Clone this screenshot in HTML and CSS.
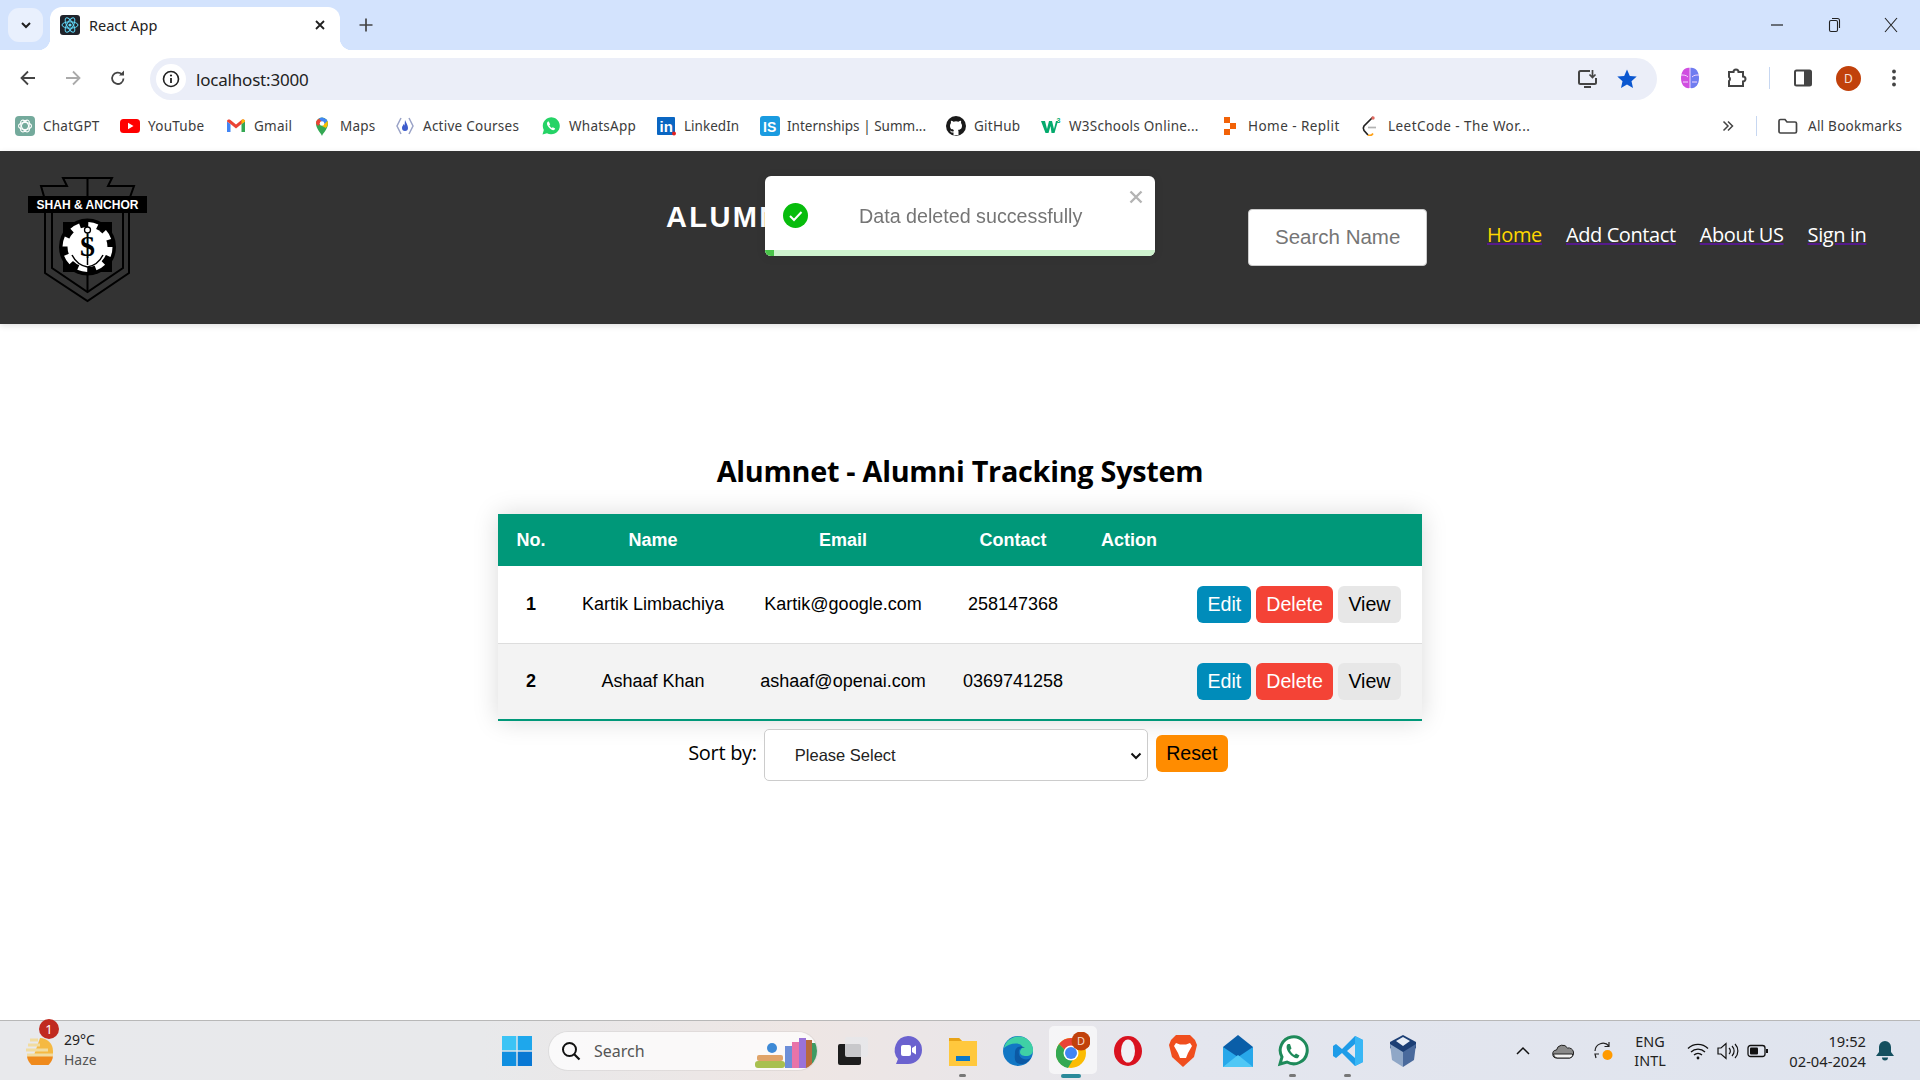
FILE: index.html
```html
<!DOCTYPE html>
<html lang="en">
<head>
<meta charset="utf-8">
<title>React App</title>
<link rel="stylesheet" href="styles.css">
</head>
<body>
<div class="tabstrip">
  <div class="tabtoggle"><svg width="14" height="14" viewBox="0 0 14 14"><path d="M3 5l4 4 4-4" fill="none" stroke="#1f1f1f" stroke-width="2"/></svg></div>
  <div class="tab">
    <svg class="favicon" width="20" height="20" viewBox="0 0 20 20"><rect width="20" height="20" rx="3" fill="#20232a"/><g fill="none" stroke="#61dafb" stroke-width="1"><ellipse cx="10" cy="10" rx="8" ry="3.2"/><ellipse cx="10" cy="10" rx="8" ry="3.2" transform="rotate(60 10 10)"/><ellipse cx="10" cy="10" rx="8" ry="3.2" transform="rotate(120 10 10)"/></g><circle cx="10" cy="10" r="1.6" fill="#61dafb"/></svg>
    <span class="tabtitle">React App</span>
    <svg class="tabclose" width="12" height="12" viewBox="0 0 12 12"><path d="M2 2l8 8M10 2l-8 8" stroke="#1f1f1f" stroke-width="1.8"/></svg>
  </div>
  <svg class="newtab" width="16" height="16" viewBox="0 0 16 16"><path d="M8 1.5v13M1.5 8h13" stroke="#444" stroke-width="1.7"/></svg>
  <div class="winctrls">
    <svg width="14" height="14" viewBox="0 0 14 14"><path d="M1 7h12" stroke="#222" stroke-width="1.2"/></svg>
    <svg width="14" height="16" viewBox="0 0 14 16"><rect x="2.5" y="3.5" width="8" height="11" rx="1.5" fill="none" stroke="#222" stroke-width="1.1"/><path d="M5 1.5h5.5a2 2 0 0 1 2 2V11" fill="none" stroke="#222" stroke-width="1.1"/></svg>
    <svg width="14" height="16" viewBox="0 0 14 16"><path d="M1 1l12 14M13 1L1 15" stroke="#222" stroke-width="1.1"/></svg>
  </div>
</div>

<div class="toolbar">
  <div class="navbtns">
    <svg width="18" height="18" viewBox="0 0 18 18"><path d="M16 9H3M9 2.5L2.5 9 9 15.500" fill="none" stroke="#444" stroke-width="1.8"/></svg>
    <svg width="18" height="18" viewBox="0 0 18 18"><path d="M2 9h13M9 2.500L15.500 9 9 15.500" fill="none" stroke="#aaa" stroke-width="1.800"/></svg>
    <svg width="18" height="18" viewBox="0 0 18 18"><path d="M14.500 9.500a5.700 5.700 0 1 1-1.700-4.300" fill="none" stroke="#444" stroke-width="1.800"/><path d="M15 1.500v5h-5z" fill="#444"/></svg>
  </div>
  <div class="omnibox">
    <div class="siteinfo"><svg width="18" height="18" viewBox="0 0 18 18"><circle cx="9" cy="9" r="7.500" fill="none" stroke="#222" stroke-width="1.600"/><path d="M9 8v5" stroke="#222" stroke-width="1.800"/><circle cx="9" cy="5.500" r="1.100" fill="#222"/></svg></div>
    <span class="url">localhost:3000</span>
    <svg class="omni-install" width="22" height="22" viewBox="0 0 22 22"><path d="M13 3H3.500A1.500 1.500 0 0 0 2 4.500v10A1.500 1.500 0 0 0 3.500 16h14a1.500 1.500 0 0 0 1.500-1.500V10" fill="none" stroke="#444" stroke-width="2"/><path d="M7 19h7" stroke="#444" stroke-width="2"/><path d="M15.500 2v7M12.500 6.500l3 3 3-3" fill="none" stroke="#444" stroke-width="1.700"/></svg>
    <svg class="omni-star" width="22" height="22" viewBox="0 0 22 22"><path d="M11 1.500l2.800 6.400 6.900.7-5.200 4.600 1.500 6.800L11 16.500l-6 3.500 1.500-6.800-5.200-4.600 6.900-.7z" fill="#0b57d0"/></svg>
  </div>
  <svg class="tool-brain" width="22" height="24" viewBox="0 0 22 24"><path d="M11 2C6 1 2 5 2 12s4 11 9 10z" fill="#d04ee0"/><path d="M11 2c5-1 9 3 9 10s-4 11-9 10z" fill="#6f7cf0"/><path d="M2 9c3 0 5 0 7 2M20 9c-3 0-5 0-7 2M4 16h5M13 16h5M11 2v20" stroke="#f4d7ff" stroke-width="1" fill="none"/></svg>
  <svg class="tool-puzzle" width="22" height="24" viewBox="0 0 22 24"><path d="M4 6h4.500a2.500 2.500 0 0 1 5 0H18v4.500a2.500 2.500 0 0 1 0 5V20H4v-5a2.500 2.500 0 0 0 0-4z" fill="none" stroke="#444" stroke-width="2"/></svg>
  <span class="tool-sep"></span>
  <svg class="tool-side" width="20" height="20" viewBox="0 0 20 20"><rect x="2" y="2.500" width="16" height="15" rx="1.500" fill="none" stroke="#444" stroke-width="2"/><rect x="11" y="2.500" width="7" height="15" fill="#444"/></svg>
  <span class="avatar">D</span>
  <svg class="tool-menu" width="6" height="20" viewBox="0 0 6 20"><circle cx="3" cy="3.500" r="1.900" fill="#444"/><circle cx="3" cy="10" r="1.900" fill="#444"/><circle cx="3" cy="16.500" r="1.900" fill="#444"/></svg>
</div>

<div class="bookmarks">
  <div class="bm"><svg width="20" height="20" viewBox="0 0 20 20"><rect width="20" height="20" rx="4" fill="#74aa9c"/><g fill="none" stroke="#fff" stroke-width="1.100"><ellipse cx="10" cy="10" rx="6.500" ry="3.500"/><ellipse cx="10" cy="10" rx="6.500" ry="3.500" transform="rotate(60 10 10)"/><ellipse cx="10" cy="10" rx="6.500" ry="3.500" transform="rotate(120 10 10)"/></g></svg><span>ChatGPT</span></div>
  <div class="bm"><svg width="20" height="20" viewBox="0 0 20 20"><rect y="3" width="20" height="14" rx="3.500" fill="#f00"/><path d="M8 6.800v6.400l5.500-3.200z" fill="#fff"/></svg><span>YouTube</span></div>
  <div class="bm"><svg width="20" height="20" viewBox="0 0 20 20"><path d="M1 5.500V16h3.500V8z" fill="#4285f4"/><path d="M15.500 8V16H19V5.500z" fill="#34a853"/><path d="M1 5.500C1 3.500 3 3 4.500 4L10 8.500 15.500 4C17 3 19 3.500 19 5.500L15.500 8 10 12.500 4.500 8z" fill="#ea4335"/><path d="M15.500 4C17 3 19 3.500 19 5.500L15.500 8z" fill="#fbbc04"/></svg><span>Gmail</span></div>
  <div class="bm"><svg width="20" height="20" viewBox="0 0 20 20"><path d="M10 20c-1-3-6-7-6-12.500a6 6 0 0 1 12 0C16 13 11 17 10 20z" fill="#34a853"/><path d="M4 7.500a6 6 0 0 1 3-5l3.500 3L6 10z" fill="#ea4335"/><path d="M7 2.500a6 6 0 0 1 8.500 2.500L12 8.500z" fill="#4285f4"/><path d="M15.500 5c.8 3 0 5-1.500 7l-4-2z" fill="#fbbc04"/><circle cx="10" cy="7.500" r="2.300" fill="#fff"/></svg><span>Maps</span></div>
  <div class="bm"><svg width="20" height="20" viewBox="0 0 20 20"><path d="M6 2L2 10l4 8M14 2l4 8-4 8" fill="none" stroke="#9aa3c7" stroke-width="1.500"/><path d="M10 4c1 3 3 5 3 8a3 3 0 0 1-6 0c0-2 1-2 1.500-4 .7.500 1 1 1 2z" fill="#3d5ccc"/></svg><span>Active Courses</span></div>
  <div class="bm"><svg width="20" height="20" viewBox="0 0 20 20"><path d="M1.500 18.500l1.300-4.600A8.500 8.500 0 1 1 6 17.200z" fill="#25d366"/><path d="M7 5.500c-1.500 1-1.500 3 .5 5.500s4.500 3.800 6 2.800l.7-1.300-2.400-1.300-1 .8c-1-.5-2-1.500-2.500-2.700l.9-.9L7.800 5.500z" fill="#fff"/></svg><span>WhatsApp</span></div>
  <div class="bm bm-tight"><svg width="20" height="20" viewBox="0 0 20 20"><rect y="1" width="18" height="18" rx="1" fill="#0a66c2"/><text x="2.500" y="16" class="svg-in">in</text><circle cx="17" cy="17.500" r="2" fill="#e02020"/></svg><span>LinkedIn</span></div>
  <div class="bm bm-tight"><svg width="20" height="20" viewBox="0 0 20 20"><rect width="20" height="20" rx="3" fill="#1a9be0"/><text x="3" y="15.500" class="svg-is">IS</text></svg><span>Internships | Summ...</span></div>
  <div class="bm"><svg width="20" height="20" viewBox="0 0 20 20"><circle cx="10" cy="10" r="10" fill="#1a1a1a"/><path d="M7.500 19.500v-3c-2.500.5-3-1-3.500-2 1 0 1.500 1.500 3.500 1 0-1 .5-1.500.5-1.500-2-.3-4-1-4-4.500 0-1 .4-1.800 1-2.500-.2-.7-.2-1.500 0-2.300 1 0 1.800.5 2.500 1a8 8 0 0 1 5 0c.7-.5 1.500-1 2.500-1 .2.800.2 1.600 0 2.300.6.700 1 1.500 1 2.500 0 3.500-2 4.200-4 4.500.4.400.5 1 .5 1.500v3.500z" fill="#fff"/></svg><span>GitHub</span></div>
  <div class="bm"><svg width="20" height="20" viewBox="0 0 20 20"><path d="M0 5h4l2 8 2-8h3l2 8 2-8h2l-3.500 12h-3L9.500 10 7.500 17h-3z" fill="#04aa6d"/><text x="15.500" y="6.500" class="svg-sup">3</text></svg><span>W3Schools Online...</span></div>
  <div class="bm bm-wide"><svg class="bm-replit" width="20" height="20" viewBox="0 0 20 20"><path d="M4 1h6v6H4zM10 7h6v6h-6zM4 13h6v6H4z" fill="#f26207"/></svg><span>Home - Replit</span></div>
  <div class="bm bm-wide"><svg width="20" height="20" viewBox="0 0 20 20"><path d="M13 1L4 10c-1 1.500-1 3 0 4.500l4 4.500" fill="none" stroke="#222" stroke-width="1.700"/><path d="M8 19c2 1 4 0 5-1.500" fill="none" stroke="#ffa116" stroke-width="1.700"/><path d="M8 11.500h8" stroke="#b3b3b3" stroke-width="1.700"/><circle cx="13" cy="2" r="1.700" fill="#e06a60"/></svg><span>LeetCode - The Wor...</span></div>
  <div class="bm-right">
    <svg class="bm-more" width="12" height="12" viewBox="0 0 12 12"><path d="M1.500 1.500L6 6l-4.500 4.500M6 1.500L10.500 6 6 10.500" fill="none" stroke="#444" stroke-width="1.500"/></svg>
    <span class="bm-sep"></span>
    <div class="bm bm-all"><svg width="21" height="18" viewBox="0 0 21 18"><path d="M2 4a1.500 1.500 0 0 1 1.500-1.500H8l2 2.500h8a1.500 1.500 0 0 1 1.500 1.500v8A1.500 1.500 0 0 1 18 16H3.500A1.500 1.500 0 0 1 2 14.500z" fill="none" stroke="#444" stroke-width="1.700"/></svg><span>All Bookmarks</span></div>
  </div>
</div>

<header class="sitenav">
  <div class="logo-cell">
    <svg class="logo" width="120" height="126" viewBox="28 177 120 126">
      <g fill="none" stroke="#000" stroke-width="2">
        <path d="M41 186H67L63 178H112L108 186H134L129 200V273L87.500 301 45 273V200z"/>
        <path d="M52 213V268L87.500 292 123 268V213"/>
        <path d="M87.500 178V196M87.500 270V292"/>
      </g>
      <rect x="28" y="196" width="119" height="17" fill="#000"/>
      <text x="87.500" y="209" class="logo-text" textLength="102" lengthAdjust="spacingAndGlyphs">SHAH &amp; ANCHOR</text>
      <rect x="63" y="222" width="49" height="50" fill="#000"/>
      <circle cx="87.500" cy="247" r="28.500" fill="#000"/>
      <circle cx="87.500" cy="247" r="20" fill="#fff"/>
      <circle cx="87.500" cy="247" r="22" fill="none" stroke="#fff" stroke-width="6" stroke-dasharray="9 8.300"/>
      <circle cx="87.500" cy="230" r="3" fill="none" stroke="#000" stroke-width="1.300"/>
      <path d="M87.500 233V265M72 255c4 8 10 11 15.500 12 5.500-1 11.500-4 15.500-12" fill="none" stroke="#000" stroke-width="1.500"/>
      <text x="87.500" y="256" class="logo-dollar">$</text>
    </svg>
  </div>
  <h1 class="brand">ALUMNET</h1>
  <div class="search-cell"><input class="search" type="text" placeholder="Search Name"></div>
  <nav class="links">
    <a class="link link-active">Home</a>
    <a class="link">Add Contact</a>
    <a class="link">About US</a>
    <a class="link">Sign in</a>
  </nav>
</header>

<div class="toast">
  <div class="toast-body">
    <svg width="25" height="25" viewBox="0 0 25 25"><circle cx="12.500" cy="12.500" r="12.500" fill="#07bc0c"/><path d="M7 13l4 4 7.500-8" fill="none" stroke="#fff" stroke-width="2"/></svg>
    <span class="toast-msg">Data deleted successfully</span>
    <svg class="toast-close" width="14" height="14" viewBox="0 0 14 14"><path d="M1.500 1.500l11 11M12.500 1.500l-11 11" stroke="#b3b3b3" stroke-width="2.400"/></svg>
  </div>
  <div class="toast-track"><div class="toast-fill"></div></div>
</div>

<main class="content">
  <h2 class="heading">Alumnet - Alumni Tracking System</h2>
  <table class="grid">
    <colgroup><col class="c-no"><col class="c-name"><col class="c-email"><col class="c-contact"><col class="c-action"><col></colgroup>
    <thead><tr><th>No.</th><th>Name</th><th>Email</th><th>Contact</th><th>Action</th><th></th></tr></thead>
    <tbody>
      <tr><th class="idx">1</th><td>Kartik Limbachiya</td><td>Kartik@google.com</td><td>258147368</td>
        <td colspan="2" class="actions"><button class="btn edit">Edit</button><button class="btn del">Delete</button><button class="btn view">View</button></td></tr>
      <tr><th class="idx">2</th><td>Ashaaf Khan</td><td>ashaaf@openai.com</td><td>0369741258</td>
        <td colspan="2" class="actions"><button class="btn edit">Edit</button><button class="btn del">Delete</button><button class="btn view">View</button></td></tr>
    </tbody>
  </table>
  <div class="sortrow">
    <label class="sortlabel">Sort by:</label>
    <div class="selectwrap">
      <select class="sortselect"><option>Please Select</option></select>
      <svg class="selectchev" width="12" height="8" viewBox="0 0 12 8"><path d="M1.500 1.500L6 6l4.500-4.500" fill="none" stroke="#111" stroke-width="2"/></svg>
    </div>
    <button class="btn reset">Reset</button>
  </div>
</main>

<footer class="taskbar">
  <div class="weather">
    <svg class="wx-icon" width="32" height="28" viewBox="0 0 32 28"><path d="M3 18h26a13 13 0 0 1-26 0z" fill="#ef8a1c"/><path d="M16 1a13 13 0 0 1 13 13v4H10z" fill="#f5b942"/><path d="M6 3h8M4 8h12M2 13h22M3 18h26" stroke="#f1dca0" stroke-width="3"/></svg>
    <span class="wx-badge">1</span>
    <div class="wx-text"><span>29°C</span><span class="wx-dim">Haze</span></div>
  </div>
  <svg class="winlogo" width="30" height="30" viewBox="0 0 30 30"><rect width="14.300" height="14.300" fill="#3cc4f5"/><rect x="15.700" width="14.300" height="14.300" fill="#1ea7ec"/><rect y="15.700" width="14.300" height="14.300" fill="#0f8fe0"/><rect x="15.700" y="15.700" width="14.300" height="14.300" fill="#0878d4"/></svg>
  <div class="tbsearch">
    <svg width="20" height="20" viewBox="0 0 20 20"><circle cx="8.500" cy="8.500" r="6.500" fill="none" stroke="#111" stroke-width="2"/><path d="M13 13l5.500 5.500" stroke="#111" stroke-width="2.200"/></svg>
    <span class="tbsearch-text">Search</span>
    <svg class="tbsearch-art" width="62" height="34" viewBox="0 0 62 34"><rect x="0" y="26" width="30" height="7" rx="3" fill="#a8c050"/><rect x="2" y="20" width="26" height="6" rx="2" fill="#e0a46a"/><circle cx="17" cy="13" r="5" fill="#3e8ad6"/><rect x="30" y="11" width="7" height="22" fill="#6d8fd8"/><rect x="37" y="7" width="7" height="26" fill="#e874a8"/><rect x="44" y="3" width="7" height="30" fill="#9a72d8"/><rect x="51" y="5" width="6" height="28" fill="#b86a3c"/><rect x="57" y="8" width="5" height="25" fill="#3f9a62"/></svg>
  </div>
  <div class="tbicons">
    <div class="tbi"><svg width="30" height="28" viewBox="0 0 30 28"><rect x="0" y="7" width="23" height="21" rx="2" fill="#1d1d1d"/><rect x="7" y="0" width="23" height="20" rx="2" fill="#e6e6ea" opacity=".85"/></svg></div>
    <div class="tbi"><svg width="32" height="34" viewBox="0 0 32 34"><path d="M16 2a14 14 0 0 1 0 28H4l2-5A14 14 0 0 1 16 2z" fill="#6b62cf"/><rect x="9" y="11" width="10" height="11" rx="2" fill="#fff"/><path d="M20 14l4-2.500v9L20 18z" fill="#fff"/></svg></div>
    <div class="tbi tbi-run"><svg width="32" height="32" viewBox="0 0 32 32"><path d="M2 3h10l3 3h15v25H2z" fill="#ffc83d"/><path d="M2 3h10l3 3H2z" fill="#e8a317"/><rect x="9" y="21" width="14" height="5" fill="#0a78c8"/></svg></div>
    <div class="tbi"><svg width="32" height="32" viewBox="0 0 32 32"><circle cx="16" cy="16" r="15" fill="#1277c4"/><path d="M2 13C4 4 13 0 21 2c6 2 10 7 10 13 0 4-3 6-7 6-3 0-6-1-6-4 0-3 4-4 1-7-4-3-13-1-17 3z" fill="#3fd0a5"/><path d="M13 17c0-5 6-7 10-4-5-1-7 2-6 6 1 5 7 7 12 4-3 6-11 8-15 4-2-3-1-7-1-10z" fill="#0c59a4"/></svg></div>
    <div class="tbi tbi-active"><svg width="34" height="38" viewBox="0 0 34 38"><circle cx="15" cy="21" r="15" fill="#fbbc04"/><path d="M15 6a15 15 0 0 1 13 8H15a7 7 0 0 0-6 4L3 12a15 15 0 0 1 12-6z" fill="#ea4335"/><path d="M3 12a15 15 0 0 0 9 24l6-10a7 7 0 0 1-9-8z" fill="#34a853"/><circle cx="15" cy="21" r="7.500" fill="#fff"/><circle cx="15" cy="21" r="6" fill="#4285f4"/><circle cx="25" cy="9" r="9.500" fill="#c1410b"/><text x="25" y="13" class="svg-d">D</text></svg><span class="tbi-bar"></span></div>
    <div class="tbi"><svg width="30" height="32" viewBox="0 0 30 32"><ellipse cx="15" cy="16" rx="14" ry="15" fill="#d9121f"/><ellipse cx="15" cy="16" rx="7" ry="11.500" fill="#f0f1f6"/></svg></div>
    <div class="tbi"><svg width="28" height="34" viewBox="0 0 28 34"><path d="M7 1h14l5 5 2 5-3 12-11 10L3 23 0 11l2-5z" fill="#f04e1e"/><path d="M7 9l4 1.500h6L21 9l2 3-4 7-2 5h-6l-2-5-4-7z" fill="#fff"/></svg></div>
    <div class="tbi"><svg width="30" height="32" viewBox="0 0 30 32"><rect y="12" width="30" height="20" fill="#28a8ea"/><path d="M0 12L15 0l15 12-15 10z" fill="#0a5ea8"/><path d="M0 32l15-12 15 12z" fill="#50c8f5"/></svg></div>
    <div class="tbi tbi-run"><svg width="32" height="32" viewBox="0 0 32 32"><path d="M3 29l2-7a13.500 13.500 0 1 1 5 5z" fill="#fff" stroke="#1e8a5a" stroke-width="3"/><path d="M11 9c-2 1-2 5 1 9s7 6 9 5l1.500-2.500-3.500-2-1.500 1.500c-2-1-3.500-2.500-4.500-5l1.500-1.500L13 9z" fill="#1e8a5a"/></svg></div>
    <div class="tbi tbi-run"><svg width="32" height="32" viewBox="0 0 32 32"><path d="M23 1l8 4v22l-8 4-13-13-6 5-3-2v-10l3-2 6 5zM23 9l-8 7 8 7z" fill="#1e9ce8"/><path d="M23 1l8 4v22l-8 4z" fill="#39b7f5"/></svg></div>
    <div class="tbi"><svg width="30" height="34" viewBox="0 0 30 34"><path d="M15 1L28 8v6l-13 8L2 14V8z" fill="#1c3f75"/><path d="M2 10l13 8v15L4 26z" fill="#8fa7c7"/><path d="M28 10L15 18v15l11-7z" fill="#4a6a9c"/><path d="M8 7l7-4 7 4-7 5z" fill="#e8eef7"/></svg></div>
  </div>
  <div class="tray">
    <div class="ts ts-chev"><svg width="14" height="10" viewBox="0 0 14 10"><path d="M1 8l6-6 6 6" fill="none" stroke="#111" stroke-width="1.500"/></svg></div>
    <div class="ts ts-cloud"><svg width="22" height="16" viewBox="0 0 22 16"><path d="M5 15a4 4 0 0 1-.5-8 6 6 0 0 1 11-2 5 5 0 0 1 2 10z" fill="#8a8a8a" stroke="#222" stroke-width="1"/><path d="M1.500 11h19a3.500 3.500 0 0 1-3 4H5a4 4 0 0 1-3.500-4z" fill="#f2f2f2" stroke="#222" stroke-width="1"/></svg></div>
    <div class="ts ts-sync"><svg width="22" height="22" viewBox="0 0 22 22"><path d="M3 11a8 8 0 0 1 14-5M17 2v4.500h-4.500M4 18l-1-4h4" fill="none" stroke="#222" stroke-width="1.200"/><circle cx="15.500" cy="15" r="5" fill="#ff9a00"/></svg></div>
    <div class="ts ts-lang"><span>ENG</span><span>INTL</span></div>
    <div class="ts ts-wifi"><svg width="22" height="18" viewBox="0 0 22 18"><path d="M1 6.500a14 14 0 0 1 20 0M4 10a10 10 0 0 1 14 0M7 13a6 6 0 0 1 8 0" fill="none" stroke="#111" stroke-width="1.300"/><circle cx="11" cy="16" r="1.400" fill="#111"/></svg></div>
    <div class="ts ts-vol"><svg width="22" height="18" viewBox="0 0 22 18"><path d="M1 6h3l5-4.500v15L4 12H1z" fill="none" stroke="#111" stroke-width="1.200"/><path d="M12 6a4 4 0 0 1 0 6M15 4a7 7 0 0 1 0 10M18 2a10 10 0 0 1 0 14" fill="none" stroke="#111" stroke-width="1.200"/></svg></div>
    <div class="ts ts-bat"><svg width="22" height="14" viewBox="0 0 22 14"><rect x="1" y="1.500" width="17" height="11" rx="2.500" fill="none" stroke="#111" stroke-width="1.300"/><rect x="3" y="3.500" width="8" height="7" rx="1" fill="#111"/><rect x="19" y="5" width="2" height="4" fill="#111"/></svg></div>
    <div class="ts ts-clock"><span>19:52</span><span>02-04-2024</span></div>
    <div class="ts ts-bell"><svg width="18" height="20" viewBox="0 0 18 20"><path d="M9 0a6 6 0 0 1 6 6v5l3 4H0l3-4V6a6 6 0 0 1 6-6z" fill="#14505f"/><path d="M6 16.500h6a3 3 0 0 1-6 0z" fill="#14505f"/></svg></div>
  </div>
</footer>
</body>
</html>
```

FILE: styles.css
```css
* { box-sizing: border-box; }
html, body { margin: 0; padding: 0; }
body {
  width: 1920px;
  height: 1080px;
  overflow: hidden;
  display: flex;
  flex-direction: column;
  background: #fff;
  font-family: "Liberation Sans", Arial, sans-serif;
  color: #000;
}
svg { display: block; flex: none; }

/* Browser chrome */
.tabstrip {
  height: 50px;
  flex: none;
  background: #d3e3fd;
  display: flex;
  align-items: flex-start;
  padding-left: 8px;
}
.tabtoggle {
  width: 35px;
  height: 34px;
  margin-top: 8px;
  border-radius: 11px;
  background: #e9f0fd;
  display: flex;
  align-items: center;
  justify-content: center;
}
.tab {
  position: relative;
  width: 290px;
  height: 43px;
  margin: 7px 0 0 7px;
  background: #fff;
  border-radius: 12px 12px 0 0;
  display: flex;
  align-items: center;
  padding: 0 14px 7px 10px;
}
.tab::before, .tab::after {
  content: "";
  position: absolute;
  bottom: 0;
  width: 12px;
  height: 12px;
}
.tab::before { left: -12px; background: radial-gradient(circle at 0 0, transparent 12px, #fff 12.500px); }
.tab::after { right: -12px; background: radial-gradient(circle at 100% 0, transparent 12px, #fff 12.500px); }
.tabtitle {
  margin-left: 9px;
  flex: 1;
  font: 14.500px "Noto Sans", sans-serif;
  color: #222;
  letter-spacing: 0;
}
.newtab { margin: 17px 0 0 18px; }
.winctrls {
  margin-left: auto;
  display: flex;
  align-items: center;
  height: 50px;
  padding-right: 22px;
  gap: 43px;
}
.toolbar {
  height: 51px;
  flex: none;
  background: #fff;
  display: flex;
  align-items: flex-start;
  padding-left: 5px;
  position: relative;
}
.navbtns {
  width: 135px;
  display: flex;
  padding: 19px 0 0 14px;
  gap: 27px;
}
.omnibox {
  width: 1507px;
  height: 42px;
  margin: 8px 0 0 10px;
  border-radius: 21px;
  background: #ebeef8;
  display: flex;
  align-items: center;
  padding: 0 19px 0 6px;
}
.siteinfo {
  width: 30px;
  height: 30px;
  border-radius: 50%;
  background: #fff;
  display: flex;
  align-items: center;
  justify-content: center;
}
.url {
  margin-left: 10px;
  flex: 1;
  font: 17px "Noto Sans", sans-serif;
  color: #222;
  letter-spacing: -.2px;
}
.omni-install { margin-right: 17px; }
.tool-brain { margin: 16px 0 0 22px; }
.tool-puzzle { margin: 16px 0 0 24px; }
.tool-sep { width: 1px; height: 22px; margin: 17px 0 0 22px; background: #c7d7f1; }
.tool-side { margin: 18px 0 0 23px; }
.avatar {
  width: 25px;
  height: 25px;
  margin: 16px 0 0 23px;
  border-radius: 50%;
  background: #c1410b;
  color: #f6e0d8;
  font: 12px/25px "Noto Sans", sans-serif;
  text-align: center;
}
.tool-menu { margin: 18px 0 0 30px; }

.bookmarks {
  height: 50px;
  flex: none;
  background: #fff;
  display: grid;
  grid-template-columns: 105px 106px 86px 83px 146px 116px 103px 186px 95px 181px 138px 366px 1fr;
  align-items: center;
  padding-left: 15px;
}
.bm {
  display: flex;
  align-items: center;
  gap: 8px;
  font: 13.500px "Noto Sans", sans-serif;
  color: #3c3c3c;
  white-space: nowrap;
  letter-spacing: .25px;
}
.bm-tight { letter-spacing: .02px; gap: 7px; }
.bm-wide { letter-spacing: .45px; }
.bm-replit { margin-left: -2px; }
.bm-right { display: flex; align-items: center; grid-column: 13; justify-self: start; margin-left: -4px; }
.bm-more { margin-right: 22px; }
.bm-sep { width: 1px; height: 20px; background: #c7d7f1; margin-right: 20px; }
.bm-all { gap: 10px; }
.svg-in { font: bold 15px "Liberation Sans", sans-serif; fill: #fff; }
.svg-is { font: bold 14px "Liberation Sans", sans-serif; fill: #fff; }
.svg-sup { font: bold 7px "Liberation Sans", sans-serif; fill: #04aa6d; }
.svg-d { font: 11px "Noto Sans", sans-serif; fill: #f6d8c8; text-anchor: middle; }

/* Site nav */
.sitenav {
  height: 173px;
  flex: none;
  background: #333;
  box-shadow: 0 2px 6px rgba(0, 0, 0, .12);
  display: grid;
  grid-template-columns: 666px 582px 239px 1fr;
  position: relative;
}
.logo { margin: 26px 0 0 28px; }
.logo-text { font: bold 13px "Liberation Sans", sans-serif; fill: #fff; text-anchor: middle; }
.logo-dollar { font: bold 30px "Liberation Serif", serif; fill: #000; text-anchor: middle; }
.brand {
  margin: 0;
  padding-top: 49px;
  font: bold 29px/34px "Liberation Sans", sans-serif;
  letter-spacing: 2.400px;
  color: #fff;
  white-space: nowrap;
}
.search {
  display: block;
  margin-top: 58px;
  width: 179px;
  height: 57px;
  padding: 0 0 2px 26px;
  border: 1px solid #ccc;
  border-radius: 4px;
  background: #fff;
  font: 20.500px "Liberation Sans", sans-serif;
}
.search::placeholder { color: #757575; opacity: 1; }
.links {
  display: flex;
  gap: 24px;
  padding-top: 69px;
  align-items: flex-start;
}
.link {
  font: 20px/30px "Open Sans", sans-serif;
  letter-spacing: -.4px;
  color: #fff;
  text-decoration: underline;
  text-decoration-color: #551a8b;
  text-decoration-thickness: 2px;
  white-space: nowrap;
}
.link-active { color: #ffd700; }

/* Toast */
.toast {
  position: fixed;
  left: 765px;
  top: 176px;
  width: 390px;
  height: 80px;
  background: #fff;
  border-radius: 6px;
  overflow: hidden;
  box-shadow: 0 1px 10px rgba(0, 0, 0, .1);
  z-index: 5;
}
.toast-body {
  height: 74px;
  display: flex;
  align-items: center;
  padding: 5px 0 0 18px;
  position: relative;
}
.toast-msg {
  margin-left: 51px;
  padding-top: 2px;
  font-size: 19.700px;
  color: #757575;
}
.toast-close { position: absolute; right: 12px; top: 14px; }
.toast-track { height: 6px; background: #cef2ce; }
.toast-fill { width: 9px; height: 6px; background: #4ac44a; }

/* Main */
.content {
  flex: 1;
  display: flex;
  flex-direction: column;
  align-items: center;
}
.heading {
  margin: 127px 0 23px;
  font: bold 28.800px/40px "Open Sans", sans-serif;
  letter-spacing: -.27px;
}
.grid {
  width: 924px;
  table-layout: fixed;
  border-collapse: collapse;
  font-size: 18px;
  box-shadow: 0 0 24px rgba(0, 0, 0, .15);
}
.c-no { width: 66px; }
.c-name { width: 178px; }
.c-email { width: 202px; }
.c-contact { width: 138px; }
.c-action { width: 94px; }
.grid thead tr { background: #009879; color: #fff; height: 52px; }
.grid th, .grid td { padding: 0; text-align: center; white-space: nowrap; }
.grid tbody tr { height: 77px; border-bottom: 1px solid #ddd; }
.grid tbody tr:nth-child(even) { background: #f3f3f3; height: 77px; border-bottom: 2px solid #009879; }
.grid .actions { text-align: right; padding-right: 21px; }
.btn {
  height: 37px;
  padding: 0 10px;
  margin-left: 5px;
  border: 0;
  border-radius: 6px;
  font: 19.600px "Liberation Sans", sans-serif;
  vertical-align: middle;
}
.edit { background: #008cba; color: #fff; }
.del { background: #f44336; color: #fff; }
.view { background: #e7e7e7; color: #000; padding: 0 10.500px; }
.sortrow {
  display: flex;
  align-items: center;
  gap: 7px;
  margin: 8px 0 0 -4px;
}
.sortlabel { font: 20px "Open Sans", sans-serif; letter-spacing: -.3px; margin-top: -6px; }
.selectwrap { position: relative; }
.sortselect {
  display: block;
  appearance: none;
  width: 384px;
  height: 52px;
  padding-left: 30px;
  border: 1px solid #ccc;
  border-radius: 5px;
  background: #fff;
  font: 16.500px "Liberation Sans", sans-serif;
  color: #222;
}
.selectchev { position: absolute; right: 6px; top: 23px; pointer-events: none; }
.reset { margin: -3px 0 0 1px; background: #ff8c00; color: #000; width: 72px; padding: 0; }

/* Taskbar */
.taskbar {
  height: 60px;
  flex: none;
  border-top: 1px solid #b8b8b8;
  background: linear-gradient(90deg, #e8e9ec 0%, #e8e9eb 25%, #eee6e4 42%, #e4e6ee 62%, #dfe4ee 100%);
  display: flex;
  align-items: center;
  position: relative;
}
.weather {
  width: 502px;
  position: relative;
  display: flex;
  align-items: center;
  padding-left: 24px;
}
.wx-icon { width: 32px; }
.wx-badge {
  position: absolute;
  left: 39px;
  top: -13px;
  width: 20px;
  height: 20px;
  border-radius: 50%;
  background: #c02a20;
  color: #fff;
  font: 13px/20px "Noto Sans", sans-serif;
  text-align: center;
}
.wx-text {
  margin: -2px 0 0 8px;
  display: flex;
  flex-direction: column;
  font: 14px/20px "Noto Sans", sans-serif;
  color: #222;
}
.wx-dim { color: #555; }
.tbsearch {
  width: 268px;
  height: 38px;
  margin-left: 17px;
  border-radius: 19px;
  background: rgba(255, 255, 255, .75);
  box-shadow: 0 0 0 1px rgba(0, 0, 0, .05);
  display: flex;
  align-items: center;
  padding-left: 12px;
  overflow: hidden;
}
.tbsearch-text { margin-left: 13px; flex: 1; font: 16px "Noto Sans", sans-serif; color: #555; }
.tbsearch-art { margin-top: 2px; }
.tbicons { display: flex; margin-left: 8px; height: 60px; }
.tbi {
  width: 55px;
  position: relative;
  display: flex;
  align-items: center;
  justify-content: center;
}
.tbi-run::after {
  content: "";
  position: absolute;
  left: 24px;
  bottom: 4px;
  width: 7px;
  height: 3px;
  border-radius: 2px;
  background: #777;
}
.tbi-active::before {
  content: "";
  position: absolute;
  left: 4px;
  top: 5px;
  width: 48px;
  height: 48px;
  border-radius: 5px;
  background: rgba(255, 255, 255, .6);
}
.tbi-active svg { position: relative; }
.tbi-bar {
  position: absolute;
  left: 16px;
  bottom: 3px;
  width: 20px;
  height: 4px;
  border-radius: 2px;
  background: #2a8a9a;
}
.tray { position: absolute; right: 0; top: 0; height: 59px; display: flex; width: 415px; }
.ts { display: flex; align-items: center; justify-content: center; }
.ts-chev { width: 36px; }
.ts-cloud { width: 44px; }
.ts-sync { width: 36px; }
.ts-lang {
  width: 58px;
  flex-direction: column;
  font: 14.400px/19px "Noto Sans", sans-serif;
  color: #222;
}
.ts-wifi { width: 37px; }
.ts-vol { width: 24px; }
.ts-bat { width: 36px; }
.ts-clock {
  width: 90px;
  flex-direction: column;
  align-items: flex-end;
  font: 14.700px/20px "Noto Sans", sans-serif;
  color: #222;
}
.ts-bell { width: 38px; }
```
